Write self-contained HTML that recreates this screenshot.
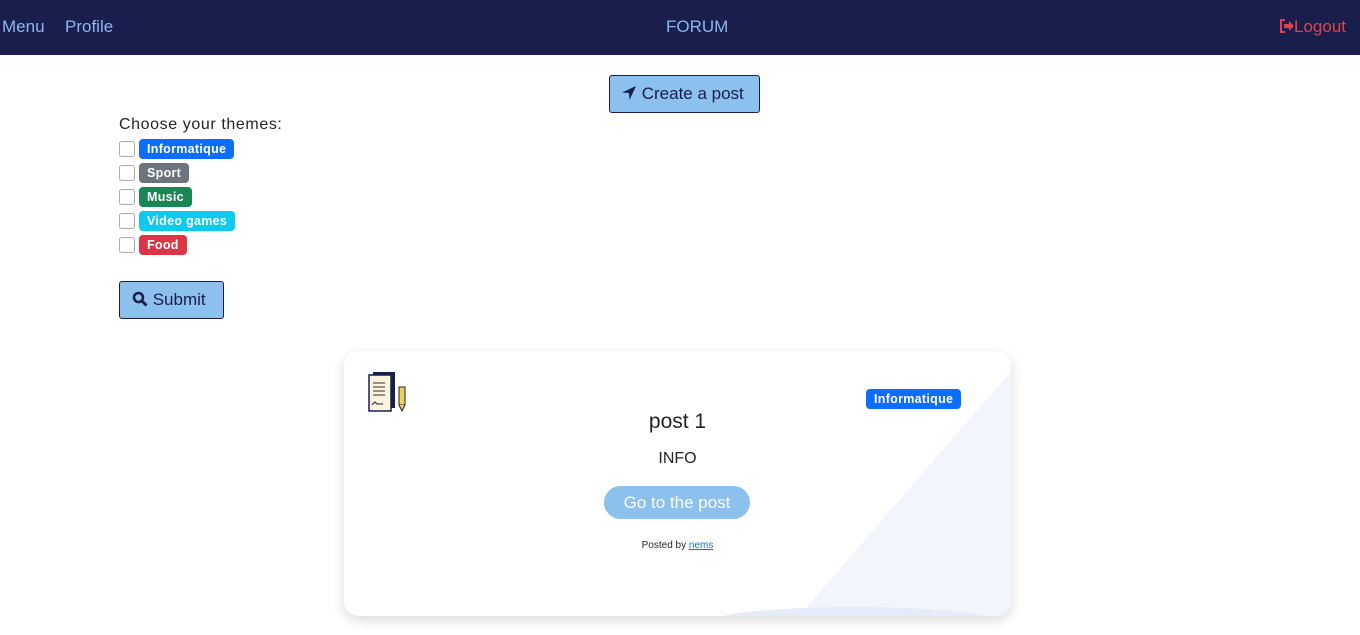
<!DOCTYPE html>
<html><head><style>
body{margin:0;background:#fff;font-family:"Liberation Sans",sans-serif;width:1360px;height:635px;overflow:hidden;position:relative;color:#212529}
.nav{position:absolute;left:0;top:0;width:1360px;height:55px;background:#1a1e4c;color:#8ab8ee;font-size:17px}
.nav span{position:absolute;top:17px}
.btn{position:absolute;background:#8cc0ed;border:1px solid #1a1e4c;border-radius:3px;color:#1a1e4c;font-size:17px;box-sizing:border-box}
.badge{position:absolute;left:139px;height:20px;border-radius:4px;color:#fff;font-weight:bold;font-size:12.5px;line-height:20px;padding:0 8px;box-sizing:border-box;letter-spacing:.3px}
.cb{position:absolute;left:119px;width:14px;height:14px;border:1px solid #aaa;border-radius:3px;background:#fff}
.card{position:absolute;left:344px;top:351px;width:667px;height:265px;border-radius:14px;background:#fff;box-shadow:0 4px 12px rgba(0,0,0,.15);overflow:hidden}
</style></head><body>
<div class="nav"><span style="left:2px">Menu</span><span style="left:65px">Profile</span><span style="left:666px">FORUM</span><span style="left:1279px;color:#e0424a"><svg width="15" height="14" viewBox="0 0 15 14" style="vertical-align:-1px"><path d="M6 1H2v12h4" fill="none" stroke="#e0424a" stroke-width="2"/><path d="M5 5h5V2l5 5-5 5V9H5z" fill="#e0424a"/></svg>Logout</span></div>
<div class="btn" style="left:609px;top:75px;width:151px;height:38px;line-height:36px;padding-left:11px"><svg width="16" height="16" viewBox="0 0 16 16" style="vertical-align:-2px"><path d="M15 1L1 7.5 8 8l.5 7z" fill="#1a1e4c"/></svg> Create a post</div>
<div style="position:absolute;left:119px;top:116px;font-size:16px;letter-spacing:.6px">Choose your themes:</div>
<div class="cb" style="top:141px"></div><div class="badge" style="top:139px;background:#0d6efd">Informatique</div>
<div class="cb" style="top:165px"></div><div class="badge" style="top:163px;background:#6c757d">Sport</div>
<div class="cb" style="top:189px"></div><div class="badge" style="top:187px;background:#198754">Music</div>
<div class="cb" style="top:213px"></div><div class="badge" style="top:211px;background:#0dcaf0">Video games</div>
<div class="cb" style="top:237px"></div><div class="badge" style="top:235px;background:#dc3545">Food</div>
<div class="btn" style="left:119px;top:281px;width:105px;height:38px;line-height:36px;padding-left:12px"><svg width="16" height="16" viewBox="0 0 16 16" style="vertical-align:-2px"><circle cx="6.5" cy="6.5" r="4.5" fill="none" stroke="#1a1e4c" stroke-width="2.5"/><path d="M10 10l4.5 4.5" stroke="#1a1e4c" stroke-width="3"/></svg> Submit</div>
<div class="card">
<svg style="position:absolute;left:0;top:0" width="667" height="265"><path d="M455 265L667 20V265Z" fill="#f3f5fc"/><ellipse cx="510" cy="270" rx="140" ry="14" fill="#e6ebfa"/></svg>
<svg style="position:absolute;left:24px;top:20px" width="42" height="42" viewBox="0 0 42 42"><rect x="5" y="1" width="22" height="36" fill="#1a1e4c"/><rect x="1" y="4" width="22" height="36" fill="#fbf3dc" stroke="#1a1e4c" stroke-width="1.5"/><path d="M5 12h12M5 16h12M5 20h12M5 24h12" stroke="#555" stroke-width="1.3"/><path d="M4 34l3-3 2 2h6" stroke="#1a1e4c" fill="none"/><rect x="31" y="16" width="6" height="18" fill="#f0d44a" stroke="#1a1e4c"/><path d="M31 34l3 6 3-6" fill="#f0d44a" stroke="#1a1e4c"/></svg>
<div style="position:absolute;left:522px;top:38px;background:#0d6efd;color:#fff;font-weight:bold;font-size:12.5px;height:20px;line-height:20px;padding:0 8px;border-radius:4px;letter-spacing:.3px">Informatique</div>
<div style="position:absolute;left:0;width:667px;text-align:center;top:59px;font-size:21px">post 1</div>
<div style="position:absolute;left:0;width:667px;text-align:center;top:99px;font-size:16px">INFO</div>
<div style="position:absolute;left:260px;top:135px;width:146px;height:33px;border-radius:17px;background:#8cc0ed;color:#fff;font-size:17px;line-height:33px;text-align:center">Go to the post</div>
<div style="position:absolute;left:0;width:667px;text-align:center;top:189px;font-size:10px">Posted by <span style="color:#0d6efd;text-decoration:underline">nems</span></div>
</div>
</body></html>
